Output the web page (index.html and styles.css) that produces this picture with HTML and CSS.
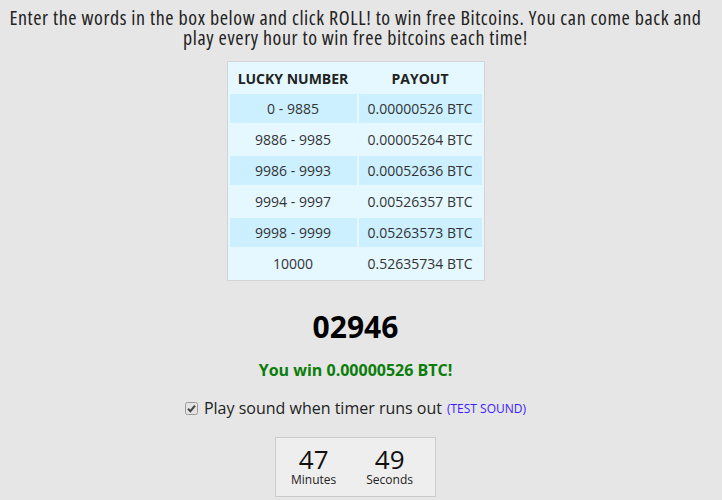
FILE: index.html
```html
<!DOCTYPE html>
<html>
<head>
<meta charset="utf-8">
<link rel="stylesheet" href="styles.css">
</head>
<body>
<div class="page">
  <p class="intro">Enter the words in the box below and click ROLL! to win free Bitcoins. You can come back and play every hour to win free bitcoins each time!</p>
  <table class="payout">
    <thead>
      <tr><th>LUCKY NUMBER</th><th>PAYOUT</th></tr>
    </thead>
    <tbody>
      <tr class="alt"><td>0 - 9885</td><td>0.00000526 BTC</td></tr>
      <tr><td>9886 - 9985</td><td>0.00005264 BTC</td></tr>
      <tr class="alt"><td>9986 - 9993</td><td>0.00052636 BTC</td></tr>
      <tr><td>9994 - 9997</td><td>0.00526357 BTC</td></tr>
      <tr class="alt"><td>9998 - 9999</td><td>0.05263573 BTC</td></tr>
      <tr><td>10000</td><td>0.52635734 BTC</td></tr>
    </tbody>
  </table>
  <div class="result">02946</div>
  <div class="win">You win 0.00000526 BTC!</div>
  <label class="sound">
    <span class="check"><svg width="13" height="13" viewBox="0 0 13 13"><rect x="0.5" y="0.5" width="12" height="12" rx="2" fill="#e4e4e4" stroke="#9a9a9a"/><path d="M3 6.8 L5.4 9.2 L10 3.6" fill="none" stroke="#444" stroke-width="2"/></svg></span>
    Play sound when timer runs out <span class="test">(TEST SOUND)</span>
  </label>
  <div class="timer">
    <div class="unit"><span class="num">47</span><span class="lbl">Minutes</span></div>
    <div class="unit"><span class="num">49</span><span class="lbl">Seconds</span></div>
  </div>
</div>
</body>
</html>
```
FILE: styles.css
```css
html, body {
  margin: 0;
  padding: 0;
  background: #e6e6e6;
  font-family: "Open Sans", "DejaVu Sans", sans-serif;
  color: #222;
}
.page {
  display: flex;
  flex-direction: column;
  align-items: center;
  padding: 0 11px 0 0;
}
.intro {
  margin: 8px 0 0;
  font-size: 20px;
  line-height: 20px;
  letter-spacing: 0.6px;
  font-stretch: 75%;
  text-align: center;
  color: #222;
}
.payout {
  margin-top: 13px;
  background: #e5f8ff;
  border: 1px solid #d5d5d5;
  border-spacing: 2px;
  font-size: 14px;
  color: #333;
}
.payout th {
  height: 28px;
  padding: 0 8px;
  font-weight: 700;
  color: #222;
}
.payout td {
  height: 29px;
  padding: 0 8px;
  text-align: center;
}
.payout td:first-child { width: 111px; }
.payout td:last-child { width: 107px; }
.payout tr.alt td { background: #ccf0ff; }
.result {
  margin-top: 28px;
  font-size: 30px;
  font-weight: 700;
  color: #000;
  line-height: 36px;
}
.win {
  margin-top: 14px;
  font-size: 16px;
  font-weight: 700;
  color: #0a7d0a;
}
.sound {
  margin-top: 16px;
  font-size: 16px;
  color: #222;
  display: flex;
  align-items: center;
  gap: 5px;
}
.check {
  display: flex;
  margin-right: 1px;
}
.test {
  font-size: 12px;
  color: #3a1cff;
}
.timer {
  margin-top: 18px;
  display: flex;
  gap: 30px;
  padding: 8px 22px 10px 15px;
  background: #eeeeee;
  border: 1px solid #cccccc;
}
.unit {
  display: flex;
  flex-direction: column;
  align-items: center;
}
.num {
  font-size: 26px;
  line-height: 27px;
  color: #111;
}
.lbl {
  font-size: 12px;
  line-height: 13px;
  color: #222;
}
```
